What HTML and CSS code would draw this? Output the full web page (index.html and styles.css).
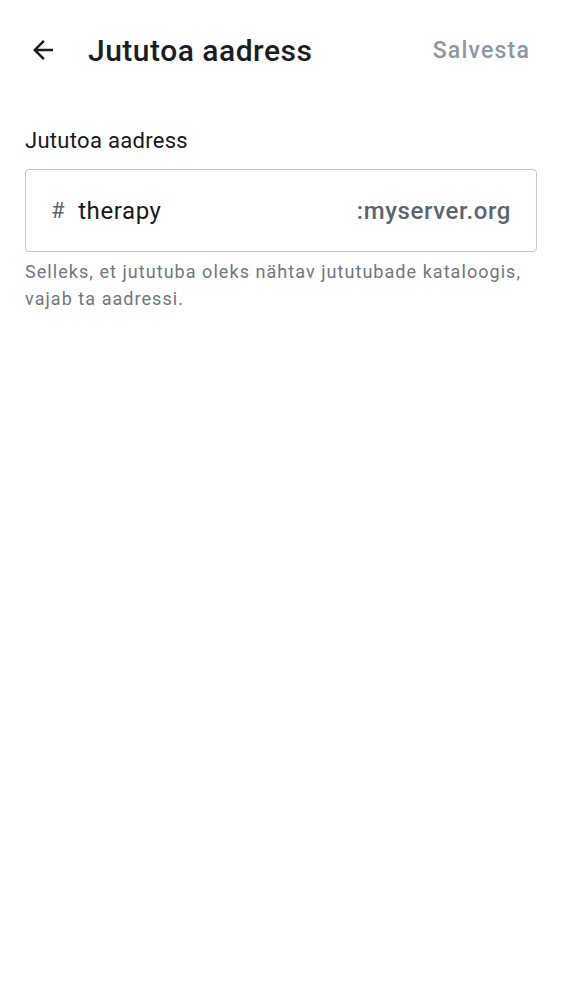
FILE: index.html
```html
<!DOCTYPE html>
<html>
<head>
<meta charset="utf-8">
<link rel="stylesheet" href="styles.css">
</head>
<body>
<header class="topbar">
  <button class="back" aria-label="Tagasi">
    <svg width="30" height="30" viewBox="0 0 24 24"><path d="M20 11H7.83l5.59-5.59L12 4l-8 8 8 8 1.41-1.41L7.83 13H20v-2z" fill="#1b1d21"/></svg>
  </button>
  <h1 class="title">Jututoa aadress</h1>
  <span class="save">Salvesta</span>
</header>
<main class="content">
  <label class="label">Jututoa aadress</label>
  <div class="field">
    <span class="hash">#</span>
    <span class="value">therapy</span>
    <span class="server">:myserver.org</span>
  </div>
  <p class="help">Selleks, et jututuba oleks nähtav jututubade kataloogis, vajab ta aadressi.</p>
</main>
</body>
</html>
```
FILE: styles.css
```css
* { box-sizing: border-box; }
body {
  margin: 0;
  font-family: Roboto, "Noto Sans", sans-serif;
  background: #fff;
  color: #17191c;
}
.topbar {
  display: flex;
  align-items: center;
  height: 100px;
  padding: 0 32px 0 28px;
}
.back {
  border: 0;
  background: none;
  padding: 0;
  width: 30px;
  height: 30px;
  display: flex;
}
.title {
  margin: 0 0 0 30px;
  font-size: 30px;
  font-weight: 500;
  letter-spacing: 0.5px;
  flex: 1;
  color: #1b1d22;
}
.save {
  font-size: 23px;
  font-weight: 500;
  letter-spacing: 1.2px;
  color: #8d97a5;
}
.content {
  padding: 28px 25px 0;
}
.label {
  display: block;
  font-size: 22px;
  letter-spacing: 0.3px;
  color: #17191c;
  margin-bottom: 16px;
}
.field {
  display: flex;
  align-items: center;
  height: 83px;
  border: 1px solid #c1c6cd;
  border-radius: 4px;
  padding: 0 25px;
  font-size: 24px;
  letter-spacing: 0.6px;
}
.hash {
  color: #5c6470;
  font-size: 22px;
  margin-right: 13px;
}
.value { flex: 1; color: #17191c; }
.server { color: #5c6470; font-weight: 500; }
.help {
  margin: 6px 0 0;
  font-size: 18px;
  line-height: 27px;
  letter-spacing: 1.05px;
  color: #6f7782;
}
```
